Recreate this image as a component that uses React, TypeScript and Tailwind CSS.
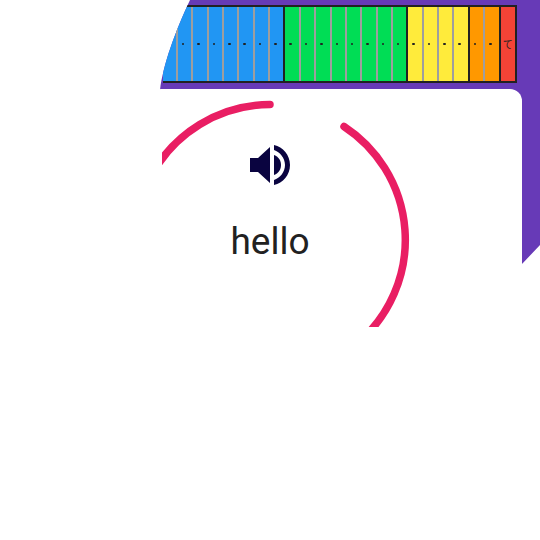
const groups = [
  { color: 'bg-[#2196f3]', count: 8 },
  { color: 'bg-[#00dd55]', count: 8 },
  { color: 'bg-[#ffeb3b]', count: 4 },
  { color: 'bg-[#ff9800]', count: 2 },
]

function Key({ last, hasDot }: { last: boolean; hasDot: boolean }) {
  return (
    <div
      className={`flex h-full w-[15.37px] shrink-0 items-center justify-start border-r-2 pl-[4px] ${last ? 'border-[#212121]' : 'border-[#9e9e9e]'}`}
    >
      {hasDot && <span className="h-[2.5px] w-[2.5px] rounded-full bg-[#212121]" />}
    </div>
  )
}

function SpeakerIcon() {
  return (
    <svg width="41" height="40" viewBox="0 0 41 40" className="text-[#0a0440]">
      <path d="M0 13H8L20 2V38L8 27H0Z" fill="currentColor" />
      <path d="M24 0C33 2 40 10 40 20C40 30 33 38 24 40V35C30 33 35 27 35 20C35 13 30 7 24 5Z" fill="currentColor" />
      <path d="M24 10C29 12 31 16 31 20C31 24 29 28 24 30Z" fill="currentColor" />
    </svg>
  )
}

export default function App() {
  return (
    <div className="h-[540px] w-[540px] overflow-hidden bg-white font-['Roboto',sans-serif]">
      <div className="ml-[160px] flex h-[327px] w-[380px] flex-col bg-[#673ab7] [clip-path:path('M30_0L380_0L380_245L362_264L362_327L0_327L0_90C3_65_15_32_30_0Z')]">
        <div className="mt-[5px] ml-[2.6px] flex h-[78px] w-fit border-y-2 border-r-2 border-[#212121]">
          {groups.map((group, g) => (
            <div key={g} className={`flex ${group.color}`}>
              {Array.from({ length: group.count }).map((_, i) => (
                <Key key={i} last={i === group.count - 1} hasDot={!(g === 0 && i === 0)} />
              ))}
            </div>
          ))}
          <div className="flex w-[14.5px] items-center justify-center bg-[#f44336] font-['Noto_Sans_CJK_JP',sans-serif] text-[10px] leading-none text-[#212121]">
            て
          </div>
        </div>
        <div className="relative mt-[6px] w-[362px] flex-1 rounded-tr-[12px] bg-white">
          <div className="flex w-[220px] flex-col items-center pt-[56px]">
            <SpeakerIcon />
            <span className="mt-[35px] text-[37px] leading-[44px] text-[#212121]">hello</span>
          </div>
          <svg width="258" height="238" viewBox="162 89 258 238" className="absolute top-0 left-[2px]">
            <path
              d="M270 104.5A135.5 135.5 0 0 0 150 178"
              fill="none"
              stroke="#e91e63"
              strokeWidth="7.5"
              strokeLinecap="round"
            />
            <path
              d="M344 126.5A135.5 135.5 0 0 1 360 341"
              fill="none"
              stroke="#e91e63"
              strokeWidth="7.5"
              strokeLinecap="round"
            />
          </svg>
        </div>
      </div>
    </div>
  )
}
